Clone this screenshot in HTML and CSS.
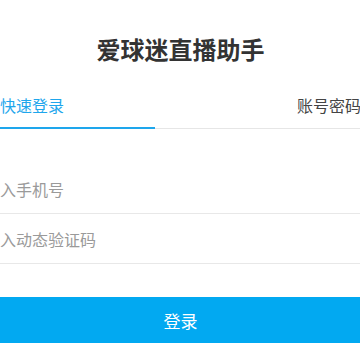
FILE: index.html
```html
<!DOCTYPE html>
<html lang="zh-CN">
<head>
<meta charset="utf-8">
<title>爱球迷直播助手</title>
<link rel="stylesheet" href="styles.css">
</head>
<body>
<div class="screen">
  <div class="sheet">
    <h1 class="title">爱球迷直播助手</h1>
    <div class="tabs">
      <div class="tab active">快速登录</div>
      <div class="tab">账号密码</div>
    </div>
    <form class="form">
      <div class="field"><input class="input" type="tel" placeholder="请输入手机号"></div>
      <div class="field"><input class="input" type="text" placeholder="请输入动态验证码"></div>
      <button class="submit" type="button">登录</button>
    </form>
  </div>
</div>
</body>
</html>
```

FILE: styles.css
```css
html, body {
  margin: 0;
  padding: 0;
  background: #ffffff;
}
body {
  font-family: "Noto Sans CJK SC", "Noto Sans", sans-serif;
  overflow: hidden;
}
.screen {
  width: 360px;
  height: 360px;
  overflow: hidden;
}
.sheet {
  margin: 0 -92px 0 -91px;
}
.title {
  margin: 0;
  padding-top: 33px;
  font-size: 24px;
  line-height: 32px;
  font-weight: 700;
  color: #333333;
  text-align: center;
}
.tabs {
  display: flex;
  gap: 51px;
  margin-top: 29px;
  border-bottom: 1px solid #e6e6e6;
}
.tab {
  flex: 1;
  text-align: center;
  font-size: 16px;
  line-height: 22px;
  padding-bottom: 11px;
  color: #444444;
}
.tab.active {
  color: #1ea6ec;
  border-bottom: 2px solid #1ea6ec;
  margin-bottom: -1px;
}
.form {
  margin: 35px 0 0;
}
.field {
  height: 49px;
  border-bottom: 1px solid #e8e8e8;
  display: flex;
  align-items: center;
}
.input {
  flex: 1;
  border: none;
  outline: none;
  background: transparent;
  padding: 0 0 0 59px;
  font-family: inherit;
  font-size: 16px;
  color: #333333;
}
.input::placeholder {
  color: #9a9a9a;
}
.submit {
  display: block;
  width: 100%;
  height: 46px;
  margin-top: 33px;
  border: none;
  background: #02a9f1;
  color: #ffffff;
  font-family: inherit;
  font-size: 17px;
}
```
